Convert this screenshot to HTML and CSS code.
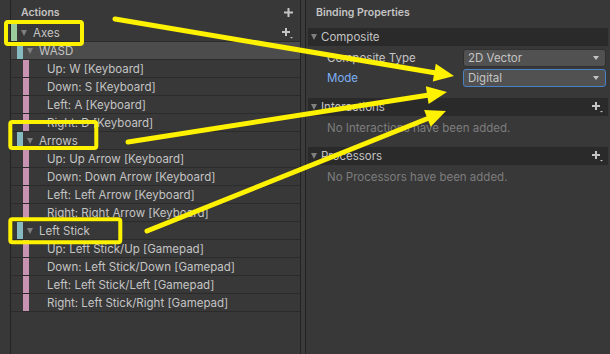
FILE: index.html
```html
<!DOCTYPE html>
<html>
<head>
<title>Input Actions</title>
<link rel="stylesheet" href="styles.css">
</head>
<body>
<div class="window">
	<div class="gutter"></div>
	<div class="actions">
		<div class="pane_head">
			<span>Actions</span>
			<span class="add"><svg width="11" height="11" viewBox="0 0 11 11"><path d="M5.5 1v9M1 5.5h9" stroke="#c4c4c4" stroke-width="2"/></svg></span>
		</div>
		<div class="tree">
			<div class="row">
				<span class="stripe action"></span><span class="tri"></span><span>Axes</span>
				<span class="add"><svg width="13" height="12" viewBox="0 0 13 12"><path d="M5 1v8M1 5h8" stroke="#c4c4c4" stroke-width="2"/><path d="M9 10h3l-1.5 1.5z" fill="#c4c4c4"/></svg></span>
			</div>
			<div class="row sel"><span class="stripe comp"></span><span class="tri"></span><span>WASD</span></div>
			<div class="row"><span class="stripe bind"></span><span class="bind_text">Up: W [Keyboard]</span></div>
			<div class="row"><span class="stripe bind"></span><span class="bind_text">Down: S [Keyboard]</span></div>
			<div class="row"><span class="stripe bind"></span><span class="bind_text">Left: A [Keyboard]</span></div>
			<div class="row"><span class="stripe bind"></span><span class="bind_text">Right: D [Keyboard]</span></div>
			<div class="row"><span class="stripe comp"></span><span class="tri"></span><span>Arrows</span></div>
			<div class="row"><span class="stripe bind"></span><span class="bind_text">Up: Up Arrow [Keyboard]</span></div>
			<div class="row"><span class="stripe bind"></span><span class="bind_text">Down: Down Arrow [Keyboard]</span></div>
			<div class="row"><span class="stripe bind"></span><span class="bind_text">Left: Left Arrow [Keyboard]</span></div>
			<div class="row"><span class="stripe bind"></span><span class="bind_text">Right: Right Arrow [Keyboard]</span></div>
			<div class="row"><span class="stripe comp"></span><span class="tri"></span><span>Left Stick</span></div>
			<div class="row"><span class="stripe bind"></span><span class="bind_text">Up: Left Stick/Up [Gamepad]</span></div>
			<div class="row"><span class="stripe bind"></span><span class="bind_text">Down: Left Stick/Down [Gamepad]</span></div>
			<div class="row"><span class="stripe bind"></span><span class="bind_text">Left: Left Stick/Left [Gamepad]</span></div>
			<div class="row"><span class="stripe bind"></span><span class="bind_text">Right: Left Stick/Right [Gamepad]</span></div>
		</div>
	</div>
	<div class="split"></div>
	<div class="props">
		<div class="pane_head">Binding Properties</div>
		<div class="fold first"><span class="tri"></span><span>Composite</span></div>
		<div class="prop_row">
			<span class="label">Composite Type</span>
			<span class="dropdown">2D Vector<span class="arrow"></span></span>
		</div>
		<div class="prop_row">
			<span class="label blue">Mode</span>
			<span class="dropdown focus">Digital<span class="arrow"></span></span>
		</div>
		<div class="fold gap"><span class="tri"></span><span>Interactions</span>
			<span class="add"><svg width="13" height="12" viewBox="0 0 13 12"><path d="M5 1v8M1 5h8" stroke="#c4c4c4" stroke-width="2"/><path d="M9 10h3l-1.5 1.5z" fill="#c4c4c4"/></svg></span>
		</div>
		<div class="empty">No Interactions have been added.</div>
		<div class="fold gap2"><span class="tri"></span><span>Processors</span>
			<span class="add"><svg width="13" height="12" viewBox="0 0 13 12"><path d="M5 1v8M1 5h8" stroke="#c4c4c4" stroke-width="2"/><path d="M9 10h3l-1.5 1.5z" fill="#c4c4c4"/></svg></span>
		</div>
		<div class="empty">No Processors have been added.</div>
	</div>
	<svg class="notes" width="610" height="354" viewBox="0 0 610 354">
		<g fill="none" stroke="#fff200" stroke-width="4">
			<rect x="6" y="22" width="76" height="22" rx="2"/>
			<rect x="10.3" y="122" width="86" height="26" rx="2"/>
			<rect x="10.3" y="219.3" width="110" height="23" rx="2"/>
		</g>
		<g stroke="#fff200" stroke-width="5" stroke-linecap="round">
			<line x1="115" y1="19" x2="436" y2="73"/>
			<line x1="128" y1="142" x2="429" y2="95"/>
			<line x1="147" y1="231" x2="429" y2="118"/>
		</g>
		<g fill="#fff200">
			<polygon points="454,76 432.8,81.6 435.8,63.8"/>
			<polygon points="447,92 428.6,104 425.8,86.2"/>
			<polygon points="446,111 430.7,126.8 424.1,110"/>
		</g>
	</svg>
</div>
</body>
</html>
```
FILE: styles.css
```css
body {
	margin: 0;
	background: #383838;
	font-family: Inter, "Noto Sans", sans-serif;
	font-size: 11.5px;
	color: #c4c4c4;
}
.window {
	position: relative;
	display: flex;
	width: 610px;
	height: 354px;
	overflow: hidden;
}
.gutter {
	width: 10px;
	border-right: 1px solid #232323;
}
.actions {
	width: 289px;
	border-right: 1px solid #232323;
}
.split {
	width: 4px;
	background: #3b3b3b;
	border-right: 1px solid #232323;
}
.props {
	flex: 1;
}
.pane_head {
	display: flex;
	align-items: center;
	height: 24px;
	padding-left: 10px;
	font-size: 10.5px;
	font-weight: 600;
}
.props .pane_head {
	height: 25px;
}
.add {
	display: flex;
	margin-left: auto;
	padding-right: 6px;
}
.row {
	display: flex;
	align-items: center;
	height: 17px;
	border-bottom: 1px solid #2b2b2b;
}
.row.sel {
	background: #4c4c4c;
}
.stripe {
	align-self: stretch;
	width: 6px;
}
.stripe.action {
	background: #9ccc9c;
}
.stripe.comp {
	margin-left: 6px;
	background: #87b9c0;
}
.stripe.bind {
	margin-left: 12px;
	background: #c893b3;
}
.tri {
	width: 0;
	height: 0;
	margin: 0 6px 0 4px;
	border-left: 3.5px solid transparent;
	border-right: 3.5px solid transparent;
	border-top: 6px solid #7f7f7f;
}
.bind_text {
	margin-left: 18px;
}
.fold {
	display: flex;
	align-items: center;
	height: 18px;
	margin: 0 2px;
	padding-left: 3px;
	background: #2a2a2a;
}
.fold .tri {
	margin: 0 4px 0 0;
}
.fold .add {
	padding-right: 4px;
}
.fold.first {
	margin-top: 3px;
	margin-bottom: 2px;
}
.fold.gap {
	margin-top: 10px;
}
.fold.gap2 {
	margin-top: 9px;
}
.prop_row {
	display: flex;
	align-items: center;
	height: 20px;
	padding-left: 21px;
}
.label {
	width: 136px;
}
.label.blue {
	color: #7eb0f5;
}
.dropdown {
	position: relative;
	box-sizing: border-box;
	width: 143px;
	height: 18px;
	line-height: 16px;
	padding-left: 4px;
	background: #515151;
	border: 1px solid #303030;
	border-radius: 3px;
}
.dropdown.focus {
	border-color: #4a82c8;
}
.arrow {
	position: absolute;
	right: 6px;
	top: 6px;
	width: 0;
	height: 0;
	border-left: 3.5px solid transparent;
	border-right: 3.5px solid transparent;
	border-top: 4px solid #c4c4c4;
}
.empty {
	height: 20px;
	line-height: 20px;
	margin-top: 2px;
	padding-left: 21px;
	color: #7d7d7d;
}
.notes {
	position: absolute;
	left: 0;
	top: 0;
	pointer-events: none;
}
```
